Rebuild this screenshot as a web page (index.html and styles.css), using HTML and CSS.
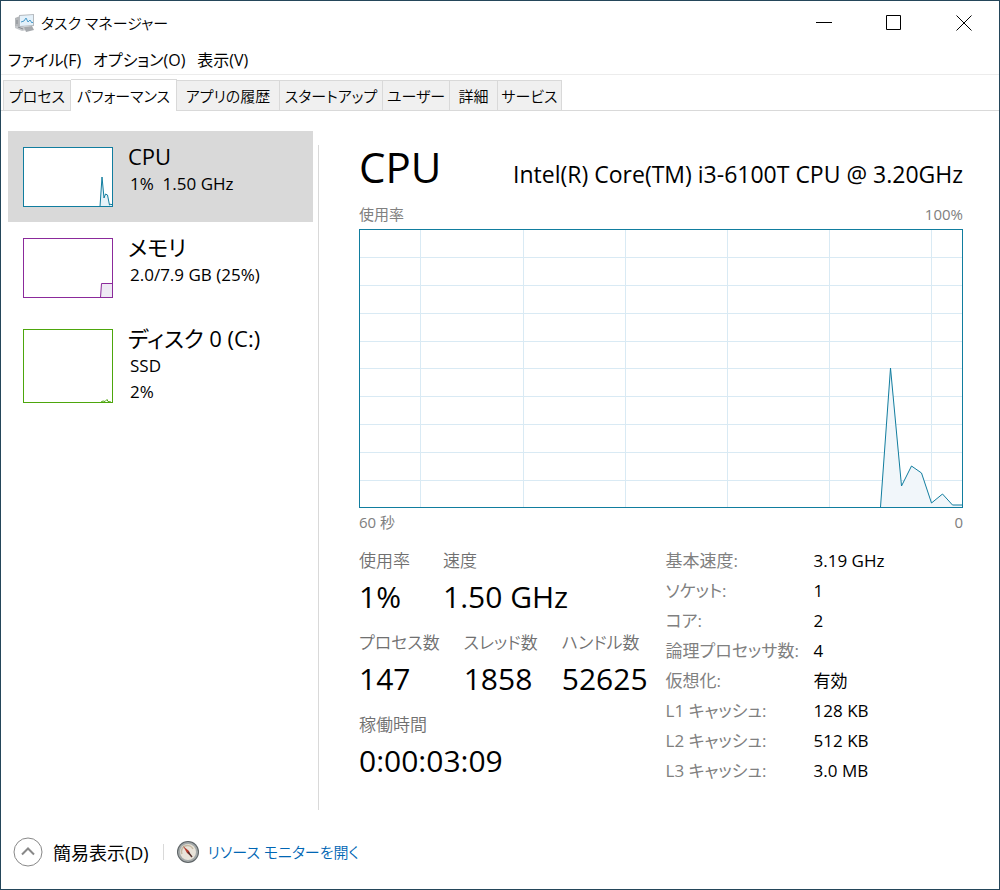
FILE: index.html
```html
<!DOCTYPE html>
<html lang="ja">
  <head>
    <meta charset="UTF-8" />
    <meta name="viewport" content="width=device-width, initial-scale=1.0" />
    <title>タスク マネージャー</title>
    <link rel="stylesheet" href="styles.css">
  </head>
  <body>
    <div class="window">
      <header class="titlebar">
        <svg class="app-icon" viewBox="0 0 22 20" aria-hidden="true">
          <path d="M1 5l5-2v12l-5-2z" fill="#b4b7ba" />
          <path d="M1 13h8l4 4-5 1-7-3z" fill="#c5c8cb" />
          <path d="M5 2l15-1v12l-15 1z" fill="#b5babf" />
          <path d="M6 3l13-1v10l-13 1z" fill="#e4f1fa" />
          <path d="M7 9l3-1 2-3 2 4 2-2 2 3 1-1" fill="none" stroke="#4a9bc9" />
          <path d="M10 14l8-1 2 4-8 2z" fill="#a5a9ad" />
          <path d="M3 7v4M4 14l5 2" stroke="#858a90" />
        </svg>
        <h1>タスク マネージャー</h1>
        <div class="window-controls">
          <button type="button" aria-label="最小化">
            <svg viewBox="0 0 16 16"><path d="M0 7.5h16" /></svg>
          </button>
          <button type="button" aria-label="最大化">
            <svg viewBox="0 0 16 16"><path d="M.5.5h14v14H.5z" /></svg>
          </button>
          <button type="button" aria-label="閉じる">
            <svg viewBox="0 0 16 16"><path d="M.5.5l15 15M15.5.5l-15 15" /></svg>
          </button>
        </div>
      </header>

      <nav class="menu">
        <button type="button">ファイル(F)</button>
        <button type="button">オプション(O)</button>
        <button type="button">表示(V)</button>
      </nav>

      <div class="tabs" role="tablist">
        <button type="button" role="tab">プロセス</button>
        <button type="button" role="tab" class="active" aria-selected="true">パフォーマンス</button>
        <button type="button" role="tab">アプリの履歴</button>
        <button type="button" role="tab">スタートアップ</button>
        <button type="button" role="tab">ユーザー</button>
        <button type="button" role="tab">詳細</button>
        <button type="button" role="tab">サービス</button>
      </div>

      <div class="content">
        <aside class="sidebar">
          <button type="button" class="resource selected">
            <svg class="thumb cpu" viewBox="0 0 90 60">
              <path d="M77 59.5L79 30l2 21 1.5-4 2 1 2 10 1.5-1 2 2" />
              <rect x=".5" y=".5" width="89" height="59" />
            </svg>
            <span class="resource-text">
              <span class="resource-name">CPU</span>
              <span class="resource-info">1%&nbsp; 1.50 GHz</span>
            </span>
          </button>
          <button type="button" class="resource">
            <svg class="thumb memory" viewBox="0 0 90 60">
              <path d="M77.5 59.5l1-14h11v14z" />
              <rect x=".5" y=".5" width="89" height="59" />
            </svg>
            <span class="resource-text">
              <span class="resource-name">メモリ</span>
              <span class="resource-info">2.0/7.9 GB (25%)</span>
            </span>
          </button>
          <button type="button" class="resource">
            <svg class="thumb disk" viewBox="0 0 90 74">
              <path d="M78 73l2-1 2 .5 2-2 1 2 3 .5" />
              <rect x=".5" y=".5" width="89" height="73" />
            </svg>
            <span class="resource-text">
              <span class="resource-name">ディスク 0 (C:)</span>
              <span class="resource-info">SSD</span>
              <span class="resource-info">2%</span>
            </span>
          </button>
        </aside>

        <main class="detail">
          <div class="detail-head">
            <h2>CPU</h2>
            <p>Intel(R) Core(TM) i3-6100T CPU @ 3.20GHz</p>
          </div>
          <div class="axis axis-top"><span>使用率</span><span>100%</span></div>
          <div class="graph">
            <svg viewBox="0 0 602 277" preserveAspectRatio="none" role="img" aria-label="CPU 使用率">
              <path class="grid" d="M60.5 0v277M163.5 0v277M265.5 0v277M367.5 0v277M469.5 0v277M571.5 0v277M0 27.5h602M0 55.5h602M0 83.5h602M0 111.5h602M0 138.5h602M0 166.5h602M0 194.5h602M0 222.5h602M0 250.5h602" />
              <path class="area" d="M520.5 277L530.5 138l11 118 10-20 10 7 10 30 11-9 10 11h10v2z" />
              <path class="line" d="M520.5 277L530.5 138l11 118 10-20 10 7 10 30 11-9 10 11h10" />
            </svg>
          </div>
          <div class="axis axis-bottom"><span>60 秒</span><span>0</span></div>

          <div class="stats">
            <div class="counters">
              <dl class="usage">
                <div><dt>使用率</dt><dd>1%</dd></div>
                <div><dt>速度</dt><dd>1.50 GHz</dd></div>
              </dl>
              <dl>
                <div><dt>プロセス数</dt><dd>147</dd></div>
                <div><dt>スレッド数</dt><dd>1858</dd></div>
                <div><dt>ハンドル数</dt><dd>52625</dd></div>
              </dl>
              <dl>
                <div><dt>稼働時間</dt><dd>0:00:03:09</dd></div>
              </dl>
            </div>
            <table class="specs">
              <tr><th scope="row">基本速度:</th><td>3.19 GHz</td></tr>
              <tr><th scope="row">ソケット:</th><td>1</td></tr>
              <tr><th scope="row">コア:</th><td>2</td></tr>
              <tr><th scope="row">論理プロセッサ数:</th><td>4</td></tr>
              <tr><th scope="row">仮想化:</th><td>有効</td></tr>
              <tr><th scope="row">L1 キャッシュ:</th><td>128 KB</td></tr>
              <tr><th scope="row">L2 キャッシュ:</th><td>512 KB</td></tr>
              <tr><th scope="row">L3 キャッシュ:</th><td>3.0 MB</td></tr>
            </table>
          </div>
        </main>
      </div>

      <footer class="footer">
        <button type="button" class="fewer">
          <svg viewBox="0 0 30 30" aria-hidden="true">
            <circle cx="15" cy="15" r="14" />
            <path d="M9 17.5l6-6 6 6" />
          </svg>
          簡易表示(D)
        </button>
        <a href="#" class="monitor">
          <svg viewBox="0 0 24 24" aria-hidden="true">
            <circle cx="12" cy="12" r="11" fill="#5c6265" />
            <circle cx="12" cy="12" r="10" fill="#a4a9a9" />
            <circle cx="12" cy="12" r="8" fill="#e9e4da" />
            <path d="M6 14a6 6 0 0 1 11-5" fill="none" stroke="#c5b9a3" stroke-width="1.5" />
            <path d="M7 6l6 5 2 5-4-3z" fill="#b5392c" />
            <path d="M12 12l4 5" stroke="#54332f" stroke-width="1.5" />
          </svg>
          <span>リソース モニターを開く</span>
        </a>
      </footer>
    </div>
  </body>
</html>
```

FILE: styles.css
```css
* {
  box-sizing: border-box;
}

body {
  margin: 0;
  background-color: #fff;
  color: #000;
  font-family: "Open Sans", "Noto Sans CJK JP", sans-serif;
  font-size: 16px;
  font-feature-settings: "palt";
}

button {
  margin: 0;
  padding: 0;
  border: none;
  background: none;
  color: inherit;
  font: inherit;
  font-feature-settings: inherit;
  white-space: nowrap;
}

h1,
h2,
p,
dl,
dd {
  margin: 0;
  font-weight: normal;
}

.window {
  display: flex;
  flex-direction: column;
  min-height: 100vh;
  border: 1px solid #24465a;
}

/* Title bar and menu */
.titlebar {
  display: flex;
  align-items: center;
  height: 44px;
  padding-left: 13px;
}

.titlebar h1 {
  margin-left: 5px;
  font-size: 15px;
  font-weight: 350;
  line-height: 20px;
}

.app-icon {
  width: 22px;
  height: 20px;
}

.window-controls {
  display: flex;
  margin-left: auto;
}

.window-controls button {
  display: grid;
  place-items: center;
  width: 70px;
  height: 44px;
}

.window-controls svg {
  width: 16px;
  height: 16px;
  fill: none;
  stroke: #000;
}

.menu {
  display: flex;
  gap: 12px;
  height: 30px;
  padding: 0 7px;
  border-bottom: 1px solid #ececec;
  line-height: 30px;
}

.tabs button {
  font-weight: 350;
}

/* Tabs */
.tabs {
  display: grid;
  grid-template-columns: 68px 106px 103px 103px 67px 48px 64px;
  align-items: end;
  height: 36px;
  padding-left: 2px;
  border-bottom: 1px solid #d9d9d9;
}

.tabs button {
  height: 30px;
  border: 1px solid #d9d9d9;
  border-left: none;
  border-bottom: none;
  background-color: #f0f0f0;
  font-size: 15px;
  line-height: 28px;
}

.tabs button:first-child {
  border-left: 1px solid #d9d9d9;
}

.tabs .active {
  height: 32px;
  margin-bottom: -1px;
  background-color: #fff;
}

/* Performance page */
.content {
  display: flex;
  flex: 1;
  padding: 20px 36px 0 7px;
}

.sidebar {
  width: 305px;
}

.resource {
  display: flex;
  align-items: flex-start;
  gap: 15px;
  width: 100%;
  min-height: 91px;
  padding: 10px 15px 8px;
  text-align: left;
}

.resource.selected {
  background-color: #d9d9d9;
}

.thumb {
  width: 90px;
  margin-top: 6px;
  fill: none;
}

.thumb path {
  fill-opacity: 0.1;
}

.thumb rect {
  fill: none;
}

.cpu {
  background-color: #fff;
  fill: #117dbb;
  stroke: #117d9f;
}

.memory {
  fill: #5b2d90;
  stroke: #8b2a9b;
}

.disk {
  stroke: #4da60c;
}

.resource-text span {
  display: block;
}

.resource-name {
  font-size: 22px;
  line-height: 30px;
}

.resource-info {
  padding-left: 2px;
  font-size: 17px;
  line-height: 26px;
}

.detail {
  display: flex;
  flex: 1;
  flex-direction: column;
  min-width: 0;
  margin: 14px 0 0 5px;
  padding-left: 40px;
  border-left: 1px solid #d9d9d9;
}

.detail-head {
  display: flex;
  align-items: baseline;
  justify-content: space-between;
  height: 60px;
}

.detail-head h2 {
  font-size: 42px;
  line-height: 44px;
}

.detail-head p {
  font-size: 23px;
}

.axis {
  display: flex;
  justify-content: space-between;
  height: 24px;
  color: #808080;
  font-size: 15px;
  line-height: 18px;
}

.graph {
  display: flex;
  flex: 1;
  min-height: 120px;
  border: 1px solid #117d9f;
}

.graph svg {
  flex: 1;
  width: 100%;
  height: 0;
  min-height: 100%;
}

.graph path {
  fill: none;
  vector-effect: non-scaling-stroke;
}

.graph .grid {
  stroke: #d9eaf4;
}

.graph .area {
  fill: #f1f6fa;
}

.graph .line {
  stroke: #117d9f;
}

.axis-bottom {
  height: 38px;
  padding-top: 5px;
}

.stats {
  display: flex;
  gap: 18px;
  height: 264px;
}

.counters dl {
  display: flex;
  gap: 24px;
  height: 82px;
}

.counters .usage {
  gap: 33px;
}

.counters dt {
  color: #707070;
  font-size: 17px;
  font-weight: 350;
  line-height: 30px;
}

.counters dd {
  font-size: 30px;
  line-height: 42px;
}

.specs {
  align-self: flex-start;
  border-collapse: collapse;
}

.specs th,
.specs td {
  height: 30px;
  padding: 0;
  font-size: 17px;
  line-height: 30px;
  text-align: left;
  white-space: nowrap;
}

.specs th {
  min-width: 148px;
  color: #808080;
  font-weight: normal;
}

/* Footer */
.footer {
  display: flex;
  align-items: center;
  height: 79px;
  padding: 4px 12px 0;
}

.footer svg {
  flex: none;
}

.fewer {
  display: flex;
  align-items: center;
  gap: 10px;
  font-size: 18px;
}

.fewer svg {
  width: 30px;
  height: 30px;
  fill: none;
  stroke: #888;
}

.fewer path {
  stroke-width: 2;
}

.monitor {
  display: flex;
  align-items: center;
  gap: 8px;
  margin-left: 14px;
  padding-left: 12px;
  border-left: 1px solid #d9d9d9;
  color: #0066b4;
  font-size: 15px;
  font-weight: 350;
  line-height: 16px;
  text-decoration: none;
}

.monitor svg {
  width: 24px;
  height: 24px;
  margin: -4px 0;
}
```
